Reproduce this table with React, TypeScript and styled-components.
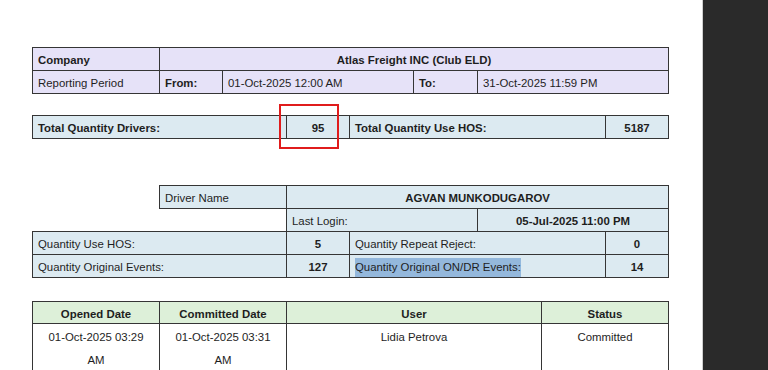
import styled, { createGlobalStyle } from 'styled-components';

const GlobalStyle = createGlobalStyle`
  html, body {
    margin: 0;
    padding: 0;
    background: #ffffff;
  }
  body {
    font-family: "Liberation Sans", Arial, sans-serif;
    color: #1e1e1e;
  }
`;

const Viewer = styled.div`
  display: flex;
  width: 768px;
  height: 370px;
  overflow: hidden;
`;

const Sheet = styled.div`
  width: 702px;
  flex-shrink: 0;
  background: #ffffff;
  padding: 47px 0 0 32px;
  box-sizing: border-box;
  display: flex;
  flex-direction: column;
  align-items: flex-start;
`;

const Gutter = styled.div`
  flex: 1;
  background: #2a2a2a;
  border-left: 1px solid #cfcfcf;
`;

const Block = styled.div<{ $gap: number }>`
  position: relative;
  margin-top: ${(p) => p.$gap}px;
`;

const Grid = styled.table`
  width: 636px;
  table-layout: fixed;
  border-collapse: collapse;
  font-size: 11.4px;
  line-height: 14px;
`;

type Tone = 'lavender' | 'blue' | 'green' | 'white';

const tones: Record<Tone, string> = {
  lavender: '#e6e2f8',
  blue: '#dceaf1',
  green: '#ddf0d9',
  white: '#ffffff',
};

const Row = styled.tr<{ $h?: number }>`
  height: ${(p) => p.$h ?? 23}px;
`;

const Cell = styled.td<{ $tone?: Tone; $bold?: boolean; $center?: boolean }>`
  border: 1px solid #353535;
  background: ${(p) => tones[p.$tone ?? 'white']};
  font-weight: ${(p) => (p.$bold ? 700 : 400)};
  text-align: ${(p) => (p.$center ? 'center' : 'left')};
  padding: 1px 5px 0;
  white-space: nowrap;
  overflow: hidden;
`;

const HeadCell = styled(Cell)`
  padding-top: 3px;
`;

const Blank = styled.td`
  border: none;
  background: transparent;
`;

const BodyCell = styled.td`
  border: 1px solid #353535;
  text-align: center;
  vertical-align: top;
  padding: 2px 9px 0;
  line-height: 23px;
`;

const Selected = styled.span`
  background: #94b8dc;
  padding: 3px 0 4px;
`;

const Marker = styled.div`
  position: absolute;
  left: 247px;
  top: -11px;
  width: 60px;
  height: 45px;
  border: 2px solid #e01c1c;
  box-sizing: border-box;
  pointer-events: none;
`;

const events = [
  {
    opened: '01-Oct-2025 03:29 AM',
    committed: '01-Oct-2025 03:31 AM',
    user: 'Lidia Petrova',
    status: 'Committed',
  },
];

export default function App() {
  return (
    <>
      <GlobalStyle />
      <Viewer>
        <Sheet>
          <Block $gap={0}>
            <Grid>
              <colgroup>
                <col style={{ width: 127 }} />
                <col style={{ width: 63 }} />
                <col style={{ width: 191 }} />
                <col style={{ width: 64 }} />
                <col style={{ width: 191 }} />
              </colgroup>
              <tbody>
                <Row>
                  <Cell $tone="lavender" $bold>Company</Cell>
                  <Cell $tone="lavender" $bold $center colSpan={4}>
                    Atlas Freight INC (Club ELD)
                  </Cell>
                </Row>
                <Row>
                  <Cell $tone="lavender">Reporting Period</Cell>
                  <Cell $tone="lavender" $bold>From:</Cell>
                  <Cell $tone="lavender">01-Oct-2025 12:00 AM</Cell>
                  <Cell $tone="lavender" $bold>To:</Cell>
                  <Cell $tone="lavender">31-Oct-2025 11:59 PM</Cell>
                </Row>
              </tbody>
            </Grid>
          </Block>

          <Block $gap={21}>
            <Grid>
              <colgroup>
                <col style={{ width: 254 }} />
                <col style={{ width: 63 }} />
                <col style={{ width: 256 }} />
                <col style={{ width: 63 }} />
              </colgroup>
              <tbody>
                <Row>
                  <Cell $tone="blue" $bold>Total Quantity Drivers:</Cell>
                  <Cell $tone="blue" $bold $center>95</Cell>
                  <Cell $tone="blue" $bold>Total Quantity Use HOS:</Cell>
                  <Cell $tone="blue" $bold $center>5187</Cell>
                </Row>
              </tbody>
            </Grid>
            <Marker />
          </Block>

          <Block $gap={46}>
            <Grid>
              <colgroup>
                <col style={{ width: 127 }} />
                <col style={{ width: 127 }} />
                <col style={{ width: 63 }} />
                <col style={{ width: 128 }} />
                <col style={{ width: 128 }} />
                <col style={{ width: 63 }} />
              </colgroup>
              <tbody>
                <Row>
                  <Blank />
                  <Cell $tone="blue">Driver Name</Cell>
                  <Cell $tone="blue" $bold $center colSpan={4}>
                    AGVAN MUNKODUGAROV
                  </Cell>
                </Row>
                <Row>
                  <Blank colSpan={2} />
                  <Cell $tone="blue" colSpan={2}>Last Login:</Cell>
                  <Cell $tone="blue" $bold $center colSpan={2}>
                    05-Jul-2025 11:00 PM
                  </Cell>
                </Row>
                <Row>
                  <Cell $tone="blue" colSpan={2}>Quantity Use HOS:</Cell>
                  <Cell $tone="blue" $bold $center>5</Cell>
                  <Cell $tone="blue" colSpan={2}>Quantity Repeat Reject:</Cell>
                  <Cell $tone="blue" $bold $center>0</Cell>
                </Row>
                <Row>
                  <Cell $tone="blue" colSpan={2}>Quantity Original Events:</Cell>
                  <Cell $tone="blue" $bold $center>127</Cell>
                  <Cell $tone="blue" colSpan={2}>
                    <Selected>Quantity Original ON/DR Events:</Selected>
                  </Cell>
                  <Cell $tone="blue" $bold $center>14</Cell>
                </Row>
              </tbody>
            </Grid>
          </Block>

          <Block $gap={23}>
            <Grid>
              <colgroup>
                <col style={{ width: 127 }} />
                <col style={{ width: 127 }} />
                <col style={{ width: 255 }} />
                <col style={{ width: 127 }} />
              </colgroup>
              <thead>
                <Row $h={22}>
                  <HeadCell as="th" $tone="green" $bold $center>Opened Date</HeadCell>
                  <HeadCell as="th" $tone="green" $bold $center>Committed Date</HeadCell>
                  <HeadCell as="th" $tone="green" $bold $center>User</HeadCell>
                  <HeadCell as="th" $tone="green" $bold $center>Status</HeadCell>
                </Row>
              </thead>
              <tbody>
                {events.map((e) => (
                  <tr key={e.opened}>
                    <BodyCell>{e.opened}</BodyCell>
                    <BodyCell>{e.committed}</BodyCell>
                    <BodyCell>{e.user}</BodyCell>
                    <BodyCell>{e.status}</BodyCell>
                  </tr>
                ))}
              </tbody>
            </Grid>
          </Block>
        </Sheet>
        <Gutter />
      </Viewer>
    </>
  );
}
